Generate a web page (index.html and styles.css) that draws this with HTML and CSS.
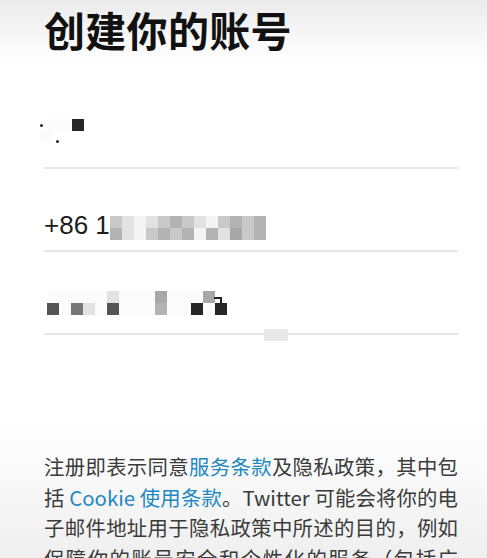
FILE: index.html
```html
<!DOCTYPE html>
<html lang="zh-CN">
<head>
  <meta charset="UTF-8">
  <meta name="viewport" content="width=device-width, initial-scale=1.0">
  <title>创建你的账号</title>
  <link rel="stylesheet" href="styles.css">
</head>
<body>
  <div class="screen">
    <h1 class="title">创建你的账号</h1>

    <div class="form">
      <!-- name (blurred) -->
      <div class="field field-name">
        <div class="mosaic">
          <div class="row">
            <span class="dot"></span><span class="c"></span><span class="c"></span><span class="c k8"></span>
          </div>
          <div class="row">
            <span class="c"></span><span class="dot low"></span>
          </div>
        </div>
      </div>

      <!-- phone -->
      <div class="field field-phone">
        <span class="phone">+86 1</span>
        <div class="mosaic">
          <div class="row">
            <span class="c k2"></span><span class="c k1"></span><span class="c k0"></span><span class="c k1"></span><span class="c k2"></span><span class="c k3"></span><span class="c k2"></span><span class="c k1"></span><span class="c k0"></span><span class="c k2"></span><span class="c k3"></span><span class="c k2"></span><span class="c k3"></span>
          </div>
          <div class="row">
            <span class="c k3"></span><span class="c k1"></span><span class="c k0"></span><span class="c k2"></span><span class="c k3"></span><span class="c k2"></span><span class="c k3"></span><span class="c k0"></span><span class="c k3"></span><span class="c k1"></span><span class="c k4"></span><span class="c k2"></span><span class="c k3"></span>
          </div>
        </div>
      </div>

      <!-- email (blurred) -->
      <div class="field field-mail">
        <div class="mosaic">
          <div class="row">
            <span class="c"></span><span class="c"></span><span class="c"></span><span class="c"></span><span class="c"></span><span class="c k1"></span><span class="c"></span><span class="c"></span><span class="c"></span><span class="c k4"></span><span class="c"></span><span class="c"></span><span class="c"></span><span class="c k4 hook"></span>
          </div>
          <div class="row">
            <span class="c k6"></span><span class="c"></span><span class="c k5"></span><span class="c k1"></span><span class="c"></span><span class="c k6"></span><span class="c"></span><span class="c"></span><span class="c"></span><span class="c k3"></span><span class="c"></span><span class="c"></span><span class="c k8"></span><span class="c"></span><span class="c k8"></span>
          </div>
        </div>
        <span class="tick"></span>
      </div>
    </div>

    <p class="terms">注册即表示同意<span class="link">服务条款</span>及隐私政策，其中包括 <span class="link">Cookie 使用条款</span>。Twitter 可能会将你的电子邮件地址用于隐私政策中所述的目的，例如保障你的账号安全和个性化的服务（包括广告）。</p>
  </div>
</body>
</html>
```

FILE: styles.css
```css
  body {
    margin: 0;
    font-family: "Noto Sans CJK SC", "Liberation Sans", sans-serif;
    color: #1a1a1a;
  }

  .screen {
    width: 487px;
    height: 558px;
    overflow: hidden;
    box-sizing: border-box;
    padding: 0 29px 0 44px;
    background: linear-gradient(to bottom, #ebebeb 0px, #fafafa 45px, #ffffff 70px, #ffffff 420px, #f6f6f6 500px, #efefef 558px);
  }

  .title {
    margin: 0;
    padding-top: 1px;
    font-size: 41px;
    line-height: 56px;
    font-weight: 700;
    color: #111111;
    letter-spacing: 0.3px;
  }

  .form {
    margin-top: 4px;
  }

  .field {
    height: 83px;
    border-bottom: 2px solid #e6e6e6;
    box-sizing: border-box;
    display: flex;
    align-items: flex-end;
    position: relative;
  }

  .field-name {
    height: 108px;
    padding-bottom: 24px;
  }

  .field-phone {
    padding-bottom: 10px;
  }

  .field-mail {
    padding-bottom: 18px;
  }

  .phone {
    font-family: "Liberation Sans", sans-serif;
    font-size: 26px;
    line-height: 30px;
    color: #1c1c1c;
  }

  .mosaic {
    display: flex;
    flex-direction: column;
  }

  .mosaic .row {
    display: flex;
    align-items: center;
  }

  .c {
    width: 12px;
    height: 12px;
    background: #fbfbfb;
  }

  .k0 { background: #f4f4f4; }
  .k1 { background: #e2e2e2; }
  .k2 { background: #c9c9c9; }
  .k3 { background: #b3b3b3; }
  .k4 { background: #a8a8a8; }
  .k5 { background: #777777; }
  .k6 { background: #545454; }
  .k8 { background: #262626; }

  .field-name .mosaic {
    margin-left: -4px;
  }

  .field-mail .mosaic {
    margin-left: 3px;
  }

  .dot {
    width: 3px;
    height: 3px;
    margin: 0 5px 0 0;
    background: #222222;
    border-radius: 50%;
  }

  .dot.low {
    margin: 8px 0 0 4px;
  }

  .hook {
    position: relative;
  }

  .hook::after {
    content: "";
    position: absolute;
    left: 11px;
    top: 6px;
    width: 6px;
    height: 6px;
    border-top: 2px solid #222222;
    border-right: 2px solid #222222;
  }

  .tick {
    position: absolute;
    left: 220px;
    bottom: -8px;
    width: 24px;
    height: 12px;
    background: #e8e8e8;
  }

  .terms {
    margin: 116px 0 0;
    font-size: 20.4px;
    line-height: 30.7px;
    color: #3b3b3b;
    text-align: justify;
  }

  .link {
    color: #2388c0;
  }
```
